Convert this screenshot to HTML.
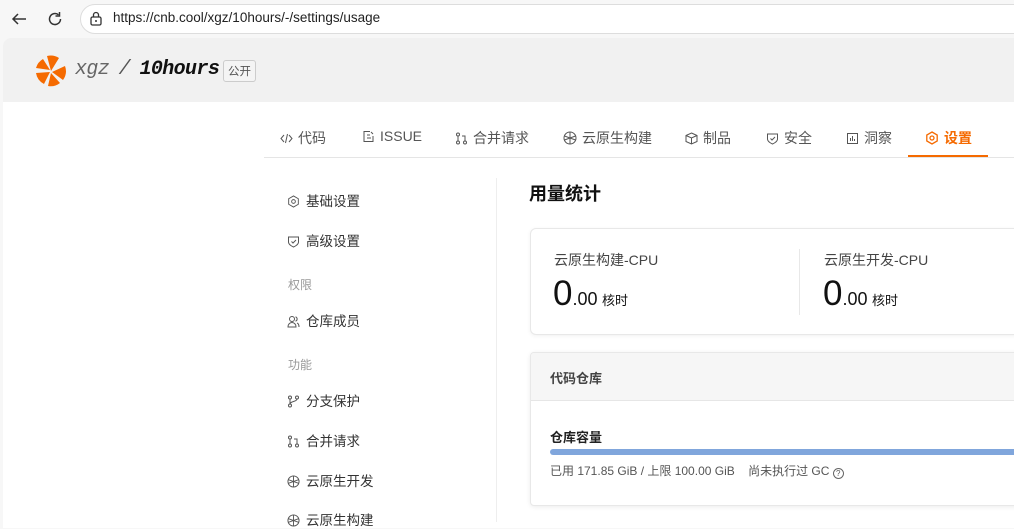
<!DOCTYPE html>
<html><head><meta charset="utf-8"><style>
*{margin:0;padding:0;box-sizing:border-box}
body{width:1014px;height:522px;overflow:hidden;background:#f7f7f7;font-family:"Liberation Sans","Noto Sans CJK SC",sans-serif;color:#333;position:relative}
.abs{position:absolute}
.url{left:80px;top:4px;width:960px;height:30px;border:1px solid #ddd;border-radius:15px;background:#fff}
.page{left:3px;top:38px;width:1020px;height:490px;background:#fff;border-radius:8px 0 0 0;overflow:hidden}
.hdr{left:0;top:0;width:1020px;height:64px;background:#f1f1f1}
.tab{position:absolute;font-size:14px;color:#555;white-space:nowrap}
.tab svg{vertical-align:-2px;margin-right:5px}
.side{position:absolute;left:287px;font-size:13.5px;color:#333;white-space:nowrap}
.side svg{vertical-align:-2px;margin-right:6px}
.grp{position:absolute;left:288px;font-size:12px;color:#999}
</style></head><body>
<svg class="abs" style="left:10px;top:10px" width="18" height="18" viewBox="0 0 18 18"><path d="M16 9H3M8 4L3 9l5 5" stroke="#333" stroke-width="1.5" fill="none"/></svg>
<svg class="abs" style="left:46px;top:10px" width="18" height="18" viewBox="0 0 18 18"><path d="M14.5 9A5.5 5.5 0 1 1 12.5 4.8" stroke="#333" stroke-width="1.5" fill="none"/><path d="M13.5 2v4h-4" stroke="#333" stroke-width="1.5" fill="none"/></svg>
<div class="abs url"></div>
<svg class="abs" style="left:89px;top:11px" width="14" height="15" viewBox="0 0 14 15"><rect x="2" y="6" width="10" height="8" rx="1.5" stroke="#333" stroke-width="1.3" fill="none"/><path d="M4.5 6V4a2.5 2.5 0 0 1 5 0v2" stroke="#333" stroke-width="1.3" fill="none"/><circle cx="7" cy="10" r="1" fill="#333"/></svg>
<div class="abs" style="left:113px;top:10px;font-size:13.5px;color:#222">https://cnb.cool/xgz/10hours/-/settings/usage</div>
<div class="abs page">
<div class="abs hdr"></div>
<svg class="abs" style="left:32px;top:17px" width="32" height="32" viewBox="-16 -16 32 32"><g fill="#f56a00"><path d="M0 0L-4-15A15 15 0 0 1 8-13Z"/><path d="M1 1L14-5A15 15 0 0 1 12 9Z"/><path d="M0 2L9 12A15 15 0 0 1-3 15Z"/><path d="M-1 1L-7 13A15 15 0 0 1-15 2Z"/><path d="M-1-1L-15-3A15 15 0 0 1-8-12Z"/></g></svg>
<div class="abs" style="left:72px;top:20px;font-family:'Liberation Mono','DejaVu Sans Mono',monospace;font-style:italic;font-size:20px;color:#666;white-space:nowrap;letter-spacing:-0.6px">xgz<span style="color:#555;margin:0 -2px"> / </span><b style="color:#111">10hours</b></div>
<div class="abs" style="left:220px;top:22px;border:1px solid #ccc;border-radius:3px;background:#f4f4f4;font-size:11.5px;color:#555;padding:2px 4px">公开</div>
</div>
<div class="abs" style="left:264px;top:157px;width:750px;height:1px;background:#e5e5e5"></div>
<div class="tab" style="left:280px;top:128px"><svg width="13" height="13" viewBox="0 0 13 13"><path d="M4 3L1 6.5 4 10M9 3l3 3.5L9 10M7.5 2l-2 9" stroke="#555" fill="none"/></svg>代码</div>
<div class="tab" style="left:362px;top:128px"><svg width="13" height="13" viewBox="0 0 13 13"><path d="M8 1.5H2v10h9V6M5 5h3M5 8h4M9 2l2 2" stroke="#555" fill="none"/></svg>ISSUE</div>
<div class="tab" style="left:455px;top:128px"><svg width="13" height="13" viewBox="0 0 13 13"><circle cx="3" cy="2.5" r="1.5" stroke="#555" fill="none"/><circle cx="3" cy="10.5" r="1.5" stroke="#555" fill="none"/><circle cx="10" cy="10.5" r="1.5" stroke="#555" fill="none"/><path d="M3 4v5M10 9V4H7" stroke="#555" fill="none"/></svg>合并请求</div>
<div class="tab" style="left:563px;top:128px"><svg width="14" height="14" viewBox="0 0 14 14"><circle cx="7" cy="7" r="6" stroke="#555" fill="none"/><path d="M7 1v12M1.5 5l11 4M1.5 9l11-4" stroke="#555" fill="none"/></svg>云原生构建</div>
<div class="tab" style="left:685px;top:128px"><svg width="13" height="13" viewBox="0 0 13 13"><path d="M6.5 1L12 3.5v6L6.5 12 1 9.5v-6zM1 3.5l5.5 2.5L12 3.5M6.5 6v6" stroke="#555" fill="none"/></svg>制品</div>
<div class="tab" style="left:766px;top:128px"><svg width="13" height="13" viewBox="0 0 13 13"><path d="M1.5 2h10v5c0 3-5 5-5 5s-5-2-5-5zM4.5 6.5l1.5 1.5 3-3" stroke="#555" fill="none"/></svg>安全</div>
<div class="tab" style="left:846px;top:128px"><svg width="13" height="13" viewBox="0 0 13 13"><rect x="1.5" y="1.5" width="10" height="10" stroke="#555" fill="none"/><path d="M4.5 9V6M6.5 9V4M8.5 9V7" stroke="#555" fill="none"/></svg>洞察</div>
<div class="tab" style="left:925px;top:128px;color:#f56a00;font-weight:bold"><svg width="14" height="14" viewBox="0 0 14 14"><path d="M7 1l5.2 3v6L7 13 1.8 10V4z" stroke="#f56a00" stroke-width="1.3" fill="none"/><circle cx="7" cy="7" r="2" stroke="#f56a00" stroke-width="1.3" fill="none"/></svg>设置</div>
<div class="abs" style="left:908px;top:155px;width:80px;height:2px;background:#f56a00"></div>
<div class="abs" style="left:496px;top:178px;width:1px;height:344px;background:#eee"></div>
<div class="side" style="top:190px"><svg width="13" height="13" viewBox="0 0 14 14"><path d="M7 1l5.2 3v6L7 13 1.8 10V4z" stroke="#555" fill="none"/><circle cx="7" cy="7" r="2" stroke="#555" fill="none"/></svg>基础设置</div>
<div class="side" style="top:230px"><svg width="13" height="13" viewBox="0 0 13 13"><path d="M1.5 2h10v5c0 3-5 5-5 5s-5-2-5-5zM4.5 6.5l1.5 1.5 3-3" stroke="#555" fill="none"/></svg>高级设置</div>
<div class="grp" style="top:276px">权限</div>
<div class="side" style="top:310px"><svg width="13" height="13" viewBox="0 0 13 13"><circle cx="5" cy="4" r="2.5" stroke="#555" fill="none"/><path d="M1 12c0-3 2-4.5 4-4.5s4 1.5 4 4.5zM8.5 1.8a2.3 2.3 0 0 1 0 4.4M10 8c1.5.5 2 2 2 4" stroke="#555" fill="none"/></svg>仓库成员</div>
<div class="grp" style="top:356px">功能</div>
<div class="side" style="top:390px"><svg width="13" height="13" viewBox="0 0 13 13"><circle cx="3" cy="2.5" r="1.5" stroke="#555" fill="none"/><circle cx="3" cy="10.5" r="1.5" stroke="#555" fill="none"/><circle cx="10" cy="2.5" r="1.5" stroke="#555" fill="none"/><path d="M3 4v5M10 4c0 3-7 2-7 5" stroke="#555" fill="none"/></svg>分支保护</div>
<div class="side" style="top:430px"><svg width="13" height="13" viewBox="0 0 13 13"><circle cx="3" cy="2.5" r="1.5" stroke="#555" fill="none"/><circle cx="3" cy="10.5" r="1.5" stroke="#555" fill="none"/><circle cx="10" cy="10.5" r="1.5" stroke="#555" fill="none"/><path d="M3 4v5M10 9V4H7" stroke="#555" fill="none"/></svg>合并请求</div>
<div class="side" style="top:470px"><svg width="13" height="13" viewBox="0 0 14 14"><circle cx="7" cy="7" r="6" stroke="#555" fill="none"/><path d="M7 1v12M1.5 5l11 4M1.5 9l11-4" stroke="#555" fill="none"/></svg>云原生开发</div>
<div class="side" style="top:509px"><svg width="13" height="13" viewBox="0 0 14 14"><circle cx="7" cy="7" r="6" stroke="#555" fill="none"/><path d="M7 1v12M1.5 5l11 4M1.5 9l11-4" stroke="#555" fill="none"/></svg>云原生构建</div>
<div class="abs" style="left:529px;top:180px;font-size:18px;font-weight:bold;color:#111">用量统计</div>
<div class="abs" style="left:530px;top:228px;width:500px;height:107px;border:1px solid #e8e8e8;border-radius:6px;background:#fff;box-shadow:0 1px 4px rgba(0,0,0,.06)"></div>
<div class="abs" style="left:799px;top:249px;width:1px;height:66px;background:#e8e8e8"></div>
<div class="abs" style="left:554px;top:250px;font-size:14px;color:#444">云原生构建-CPU</div>
<div class="abs" style="left:553px;top:274px;color:#111;white-space:nowrap"><span style="font-size:35px">0</span><span style="font-size:18px">.00</span> <span style="font-size:13px">核时</span></div>
<div class="abs" style="left:824px;top:250px;font-size:14px;color:#444">云原生开发-CPU</div>
<div class="abs" style="left:823px;top:274px;color:#111;white-space:nowrap"><span style="font-size:35px">0</span><span style="font-size:18px">.00</span> <span style="font-size:13px">核时</span></div>
<div class="abs" style="left:530px;top:352px;width:500px;height:154px;border:1px solid #e8e8e8;border-radius:4px;background:#fff;box-shadow:0 1px 5px rgba(0,0,0,.08);overflow:hidden">
<div style="height:48px;background:#f6f6f6;border-bottom:1px solid #e6e6e6;padding:15px 0 0 19px;font-size:13px;font-weight:bold;color:#444">代码仓库</div>
<div style="position:absolute;left:19px;top:74px;font-size:13px;font-weight:bold;color:#222">仓库容量</div>
<div style="position:absolute;left:19px;top:96px;width:500px;height:6px;border-radius:3px;background:#80a6dc"></div>
<div style="position:absolute;left:19px;top:109px;font-size:12px;color:#555;white-space:nowrap">已用 171.85 GiB / 上限 100.00 GiB &nbsp;&nbsp; 尚未执行过 GC <span style="display:inline-block;width:11px;height:11px;border:1px solid #666;border-radius:50%;font-size:8px;line-height:9px;text-align:center;vertical-align:-1px">?</span></div>
</div>
</body></html>
